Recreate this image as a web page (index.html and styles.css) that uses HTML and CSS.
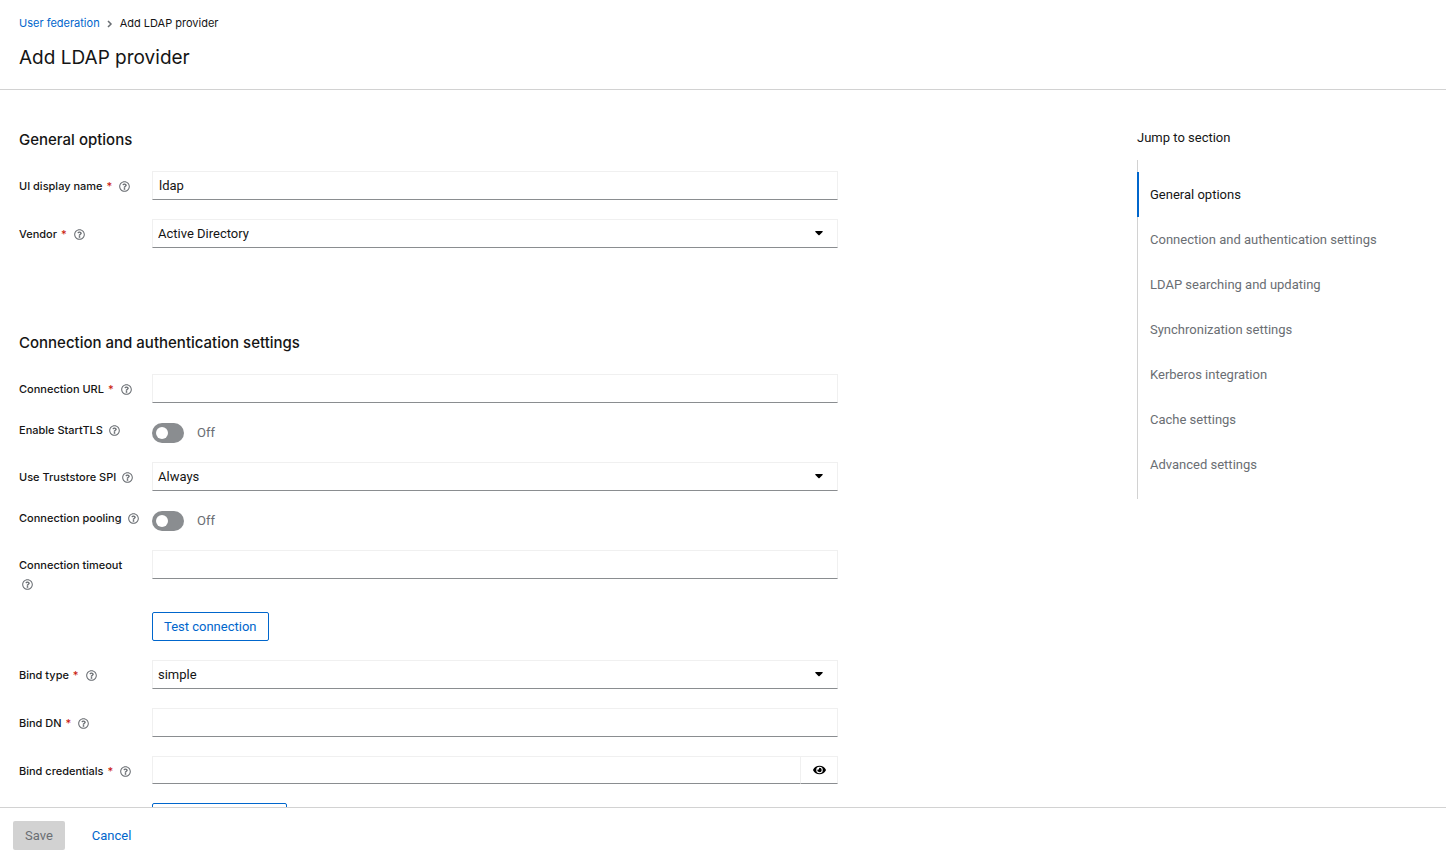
FILE: index.html
```html
<!DOCTYPE html>
<html lang="en">
<head>
    <meta charset="UTF-8">
    <meta name="viewport" content="width=device-width, initial-scale=1.0">
    <title>Add LDAP provider</title>
    <link rel="stylesheet" href="styles.css">
</head>
<body>
    <!-- shared icons -->
    <svg class="sprite" aria-hidden="true">
        <symbol id="icon-help" viewBox="0 0 512 512">
            <path d="M256 8C119 8 8 119 8 256s111 248 248 248 248-111 248-248S393 8 256 8zm0 448c-110.500 0-200-89.400-200-200 0-110.500 89.500-200 200-200 110.500 0 200 89.500 200 200 0 110.500-89.400 200-200 200zm107.200-255.200c0 67.100-72.400 68.100-72.400 92.900V300c0 6.600-5.400 12-12 12h-45.600c-6.600 0-12-5.400-12-12v-8.700c0-35.700 27.100-50 47.600-61.500 17.600-9.800 28.300-16.500 28.300-29.600 0-17.200-22-28.700-39.800-28.700-23.200 0-33.900 11-48.900 30-4.100 5.100-11.500 6.100-16.700 2.100l-27.800-21.100c-5.100-3.900-6.300-11.100-2.600-16.400C184.800 131.500 214.900 112 261.800 112c49.100 0 101.400 38.300 101.400 88.800zM298 368c0 23.200-18.800 42-42 42s-42-18.800-42-42 18.800-42 42-42 42 18.800 42 42z"/>
        </symbol>
        <symbol id="icon-caret" viewBox="0 0 320 192">
            <path d="M31 0h258c18 0 27 21 14 34L174 163c-8 8-20 8-28 0L17 34C4 21 13 0 31 0z"/>
        </symbol>
    </svg>

    <header class="page-header">
        <nav class="breadcrumb" aria-label="Breadcrumb">
            <a href="#">User federation</a>
            <svg class="chevron" viewBox="0 0 6 8" aria-hidden="true"><path d="M1 1l3 3-3 3"/></svg>
            <span>Add LDAP provider</span>
        </nav>
        <h1>Add LDAP provider</h1>
    </header>

    <main class="content">
        <form class="ldap-form" id="ldap-form">
            <section class="form-section" id="general">
                <h2>General options</h2>
                <div class="form-group">
                    <div class="form-label">
                        <label for="name">UI display name <span class="required">*</span></label>
                        <button class="help" type="button" aria-label="Help for UI display name"><svg><use href="#icon-help"/></svg></button>
                    </div>
                    <input class="text-input" type="text" id="name" value="ldap">
                </div>
                <div class="form-group">
                    <div class="form-label">
                        <label for="vendor">Vendor <span class="required">*</span></label>
                        <button class="help" type="button" aria-label="Help for Vendor"><svg><use href="#icon-help"/></svg></button>
                    </div>
                    <div class="select">
                        <select id="vendor"><option>Active Directory</option></select>
                        <svg class="caret"><use href="#icon-caret"/></svg>
                    </div>
                </div>
            </section>

            <section class="form-section" id="connection">
                <h2>Connection and authentication settings</h2>
                <div class="form-group">
                    <div class="form-label">
                        <label for="url">Connection URL <span class="required">*</span></label>
                        <button class="help" type="button" aria-label="Help for Connection URL"><svg><use href="#icon-help"/></svg></button>
                    </div>
                    <input class="text-input" type="text" id="url">
                </div>
                <div class="form-group switch-group">
                    <div class="form-label">
                        <label for="starttls">Enable StartTLS</label>
                        <button class="help" type="button" aria-label="Help for Enable StartTLS"><svg><use href="#icon-help"/></svg></button>
                    </div>
                    <div class="switch">
                        <input type="checkbox" role="switch" id="starttls">
                        <label for="starttls">Off</label>
                    </div>
                </div>
                <div class="form-group">
                    <div class="form-label">
                        <label for="truststore">Use Truststore SPI</label>
                        <button class="help" type="button" aria-label="Help for Use Truststore SPI"><svg><use href="#icon-help"/></svg></button>
                    </div>
                    <div class="select">
                        <select id="truststore"><option>Always</option></select>
                        <svg class="caret"><use href="#icon-caret"/></svg>
                    </div>
                </div>
                <div class="form-group switch-group">
                    <div class="form-label">
                        <label for="pooling">Connection pooling</label>
                        <button class="help" type="button" aria-label="Help for Connection pooling"><svg><use href="#icon-help"/></svg></button>
                    </div>
                    <div class="switch">
                        <input type="checkbox" role="switch" id="pooling">
                        <label for="pooling">Off</label>
                    </div>
                </div>
                <div class="form-group">
                    <div class="form-label stacked">
                        <label for="timeout">Connection timeout</label>
                        <button class="help" type="button" aria-label="Help for Connection timeout"><svg><use href="#icon-help"/></svg></button>
                    </div>
                    <input class="text-input" type="text" id="timeout">
                </div>
                <div class="form-group action-group">
                    <button class="btn btn-secondary" type="button">Test connection</button>
                </div>
                <div class="form-group">
                    <div class="form-label">
                        <label for="bind-type">Bind type <span class="required">*</span></label>
                        <button class="help" type="button" aria-label="Help for Bind type"><svg><use href="#icon-help"/></svg></button>
                    </div>
                    <div class="select">
                        <select id="bind-type"><option>simple</option></select>
                        <svg class="caret"><use href="#icon-caret"/></svg>
                    </div>
                </div>
                <div class="form-group">
                    <div class="form-label">
                        <label for="bind-dn">Bind DN <span class="required">*</span></label>
                        <button class="help" type="button" aria-label="Help for Bind DN"><svg><use href="#icon-help"/></svg></button>
                    </div>
                    <input class="text-input" type="text" id="bind-dn">
                </div>
                <div class="form-group">
                    <div class="form-label">
                        <label for="bind-credentials">Bind credentials <span class="required">*</span></label>
                        <button class="help" type="button" aria-label="Help for Bind credentials"><svg><use href="#icon-help"/></svg></button>
                    </div>
                    <div class="password">
                        <input class="text-input" type="password" id="bind-credentials">
                        <button type="button" aria-label="Show password">
                            <svg viewBox="0 0 576 512"><path d="M572.500 241.400C518.300 135.600 410.900 64 288 64S57.700 135.600 3.500 241.400a32.400 32.400 0 0 0 0 29.200C57.700 376.400 165.100 448 288 448s230.300-71.600 284.500-177.400a32.400 32.400 0 0 0 0-29.200zM288 400a144 144 0 1 1 144-144 143.900 143.900 0 0 1-144 144zm0-240a95.300 95.300 0 0 0-25.300 3.800 47.900 47.900 0 0 1-66.900 66.900A95.800 95.800 0 1 0 288 160z"/></svg>
                        </button>
                    </div>
                </div>
                <div class="form-group action-group">
                    <button class="btn btn-secondary" type="button">Test authentication</button>
                </div>
            </section>
        </form>

        <nav class="jump-links" aria-labelledby="jump-title">
            <div class="jump-title" id="jump-title">Jump to section</div>
            <ul>
                <li class="current"><a href="#general">General options</a></li>
                <li><a href="#connection">Connection and authentication settings</a></li>
                <li><a href="#searching">LDAP searching and updating</a></li>
                <li><a href="#sync">Synchronization settings</a></li>
                <li><a href="#kerberos">Kerberos integration</a></li>
                <li><a href="#cache">Cache settings</a></li>
                <li><a href="#advanced">Advanced settings</a></li>
            </ul>
        </nav>
    </main>

    <footer class="form-actions">
        <button class="btn btn-save" type="submit" form="ldap-form" disabled>Save</button>
        <a class="btn btn-link" href="#">Cancel</a>
    </footer>
</body>
</html>
```
FILE: styles.css
```css
* {
    box-sizing: border-box;
}

body {
    display: flex;
    flex-direction: column;
    height: 100vh;
    margin: 0;
    background-color: #fff;
    color: #151515;
    font-family: Roboto, "Liberation Sans", sans-serif;
    font-size: 13px;
    line-height: 19px;
}

h1, h2, ul {
    margin: 0;
    padding: 0;
    font-weight: 400;
}

h1, h2, .breadcrumb, .form-label {
    font-family: Inter, Roboto, sans-serif;
}

a {
    color: #06c;
    text-decoration: none;
}

button, input, select {
    margin: 0;
    font: inherit;
    color: inherit;
}

button {
    padding: 0;
    border: none;
    background: none;
    cursor: pointer;
}

.sprite {
    display: none;
}

/* Header */
.page-header {
    flex: none;
    padding: 14px 19px 18px;
    border-bottom: 1px solid #d2d2d2;
}

.breadcrumb {
    display: flex;
    align-items: center;
    gap: 7px;
    font-size: 11px;
}

.chevron {
    width: 6px;
    height: 8px;
    fill: none;
    stroke: #6a6e73;
    stroke-width: 1.500;
}

h1 {
    margin-top: 12px;
    font-size: 19px;
    line-height: 26px;
}

/* Form */
.content {
    display: flex;
    flex: 1;
    justify-content: space-between;
    min-height: 0;
    padding: 39px 19px 0;
    overflow: hidden;
}

.ldap-form {
    flex: 0 1 819px;
}

.form-section {
    display: flex;
    flex-direction: column;
    gap: 19px;
    margin-bottom: 84px;
}

h2 {
    margin-bottom: 2px;
    font-size: 15px;
    font-weight: 500;
    line-height: 21px;
}

.form-group {
    display: grid;
    grid-template-columns: 133px 1fr;
    align-items: start;
}

.form-label {
    display: flex;
    align-items: center;
    column-gap: 3px;
    padding-top: 6px;
    font-size: 11px;
    font-weight: 500;
}

.form-label.stacked {
    flex-direction: column;
    align-items: flex-start;
}

.switch-group .form-label {
    padding-top: 0;
    margin-top: -1px;
}

.required {
    margin: 0 1px;
    color: #c9190b;
}

.help {
    display: flex;
    align-items: center;
    height: 18px;
    padding: 0 3px;
    color: #6a6e73;
}

.help svg {
    width: 11px;
    height: 11px;
    fill: currentColor;
}

.text-input, .select select {
    width: 100%;
    height: 29px;
    padding: 0 6px;
    border: 1px solid #f0f0f0;
    border-bottom-color: #8a8d90;
    border-radius: 0;
    background-color: #fff;
}

.select {
    display: grid;
    align-items: center;
}

.select select, .caret {
    grid-area: 1 / 1;
}

.select select {
    padding: 0 5px;
    appearance: none;
}

.caret {
    justify-self: end;
    width: 8px;
    height: 5px;
    margin-right: 15px;
    pointer-events: none;
}

.switch {
    display: flex;
    align-items: center;
    gap: 13px;
    height: 21px;
    color: #6a6e73;
}

.switch input {
    display: flex;
    align-items: center;
    width: 32px;
    height: 20px;
    padding: 0 4px;
    border-radius: 10px;
    background-color: #8a8d90;
    appearance: none;
}

.switch input::before {
    width: 12px;
    height: 12px;
    border-radius: 50%;
    background-color: #fff;
    content: "";
}

.switch input:checked {
    justify-content: flex-end;
    background-color: #06c;
}

.password {
    display: flex;
}

.password .text-input {
    flex: 1;
    height: 28px;
}

.password button {
    display: flex;
    align-items: center;
    justify-content: center;
    width: 37px;
    height: 28px;
    border: 1px solid #f0f0f0;
    border-left: none;
    border-bottom-color: #8a8d90;
}

.password svg {
    width: 13px;
    height: 12px;
}

.action-group .btn {
    grid-column: 2;
    justify-self: start;
}

.btn {
    padding: 5px 12px;
    border-radius: 2px;
}

.btn-secondary {
    padding: 4px 11px;
    border: 1px solid #06c;
    color: #06c;
}

.btn-save {
    background-color: #d2d2d2;
    color: #6a6e73;
}

/* Jump links */
.jump-links {
    flex: none;
    width: 290px;
}

.jump-title {
    margin-bottom: 13px;
    line-height: 18px;
}

.jump-links ul {
    padding: 12px 0;
    border-left: 1px solid #d2d2d2;
    list-style: none;
}

.jump-links li {
    margin-left: -1px;
}

.jump-links li a {
    display: block;
    padding: 13px;
    color: #6a6e73;
}

.jump-links .current a {
    padding-left: 11px;
    border-left: 2px solid #06c;
    color: #151515;
}

/* Footer */
.form-actions {
    display: flex;
    flex: none;
    gap: 15px;
    padding: 13px 13px 4px;
    border-top: 1px solid #d2d2d2;
}
```
